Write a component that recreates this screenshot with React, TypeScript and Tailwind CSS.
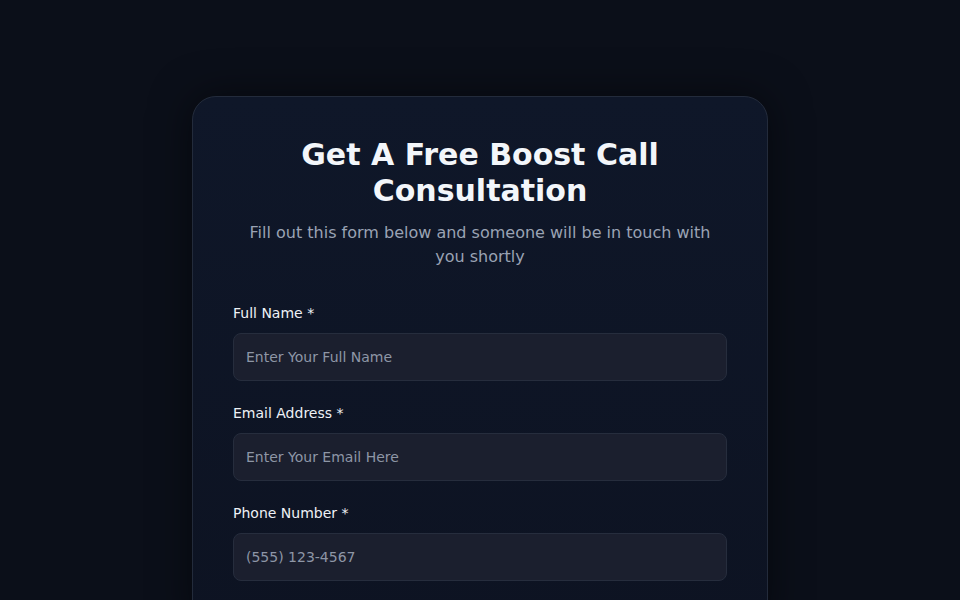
import React from 'react';

const FIELDS = [
    { id: 'name', label: 'Full Name *', placeholder: 'Enter Your Full Name', type: 'text' },
    { id: 'email', label: 'Email Address *', placeholder: 'Enter Your Email Here', type: 'email' },
    { id: 'phone', label: 'Phone Number *', placeholder: '(555) 123-4567', type: 'tel' },
];

const App: React.FC = () => {
    return (
        <div
            className="min-h-screen w-full bg-[#0b0f19] flex justify-center pt-24 pb-24"
            style={{ fontFamily: '"DejaVu Sans", "Noto Sans", sans-serif' }}
        >
            <div className="w-[576px] rounded-3xl border border-[#232b3b] bg-gradient-to-b from-[#0f1729] to-[#0d1322] shadow-[0_0_40px_rgba(0,0,0,0.5)] px-10 pt-10 pb-12">
                <h1 className="text-[30px] leading-9 font-bold text-[#f3f6fa] text-center">
                    Get A Free Boost Call Consultation
                </h1>
                <p className="mt-3 text-base leading-6 text-[#9aa3b4] text-center px-2">
                    Fill out this form below and someone will be in touch with you shortly
                </p>

                <form className="mt-[34px] flex flex-col gap-[22px]" onSubmit={(e) => e.preventDefault()}>
                    {FIELDS.map((f) => (
                        <div key={f.id} className="flex flex-col">
                            <label htmlFor={f.id} className="text-sm leading-5 text-[#eef1f6] mb-[10px]">
                                {f.label}
                            </label>
                            <input
                                id={f.id}
                                type={f.type}
                                placeholder={f.placeholder}
                                className="h-12 w-full rounded-lg border border-[#262d3d] bg-[#1b1f2e] px-3 text-sm text-white placeholder:text-[#8e96a6] outline-none"
                            />
                        </div>
                    ))}
                </form>
            </div>
        </div>
    );
};

export default App;
